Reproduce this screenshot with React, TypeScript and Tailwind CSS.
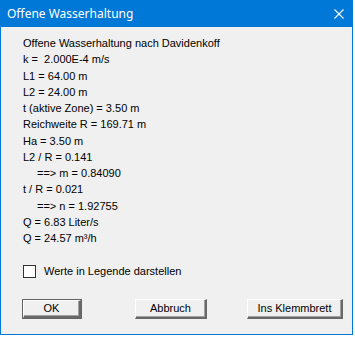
import React from "react";

const lines: { text: React.ReactNode; indent?: boolean }[] = [
  { text: "Offene Wasserhaltung nach Davidenkoff" },
  { text: "k =  2.000E-4 m/s" },
  { text: "L1 = 64.00 m" },
  { text: "L2 = 24.00 m" },
  { text: "t (aktive Zone) = 3.50 m" },
  { text: "Reichweite R = 169.71 m" },
  { text: "Ha = 3.50 m" },
  { text: "L2 / R = 0.141" },
  { text: "==> m = 0.84090", indent: true },
  { text: "t / R = 0.021" },
  { text: "==> n = 1.92755", indent: true },
  { text: "Q = 6.83 Liter/s" },
  { text: "Q = 24.57 m³/h" },
];

function Button({ label, isDefault, className }: { label: string; isDefault?: boolean; className: string }) {
  return (
    <button
      className={`${className} h-[20px] ${isDefault ? "border border-[#646464]" : ""} bg-[#f0f0f0] p-0`}
    >
      <span
        className="flex h-full w-full items-center justify-center border-t border-l border-white border-b-2 border-r-2 border-b-[#696969] border-r-[#696969] text-[11px] text-black"
        style={{ boxShadow: "inset -1px -1px 0 #a0a0a0" }}
      >
        {label}
      </span>
    </button>
  );
}

export default function App() {
  return (
    <div className="h-[337px] w-[355px] bg-white font-['Liberation_Sans',Arial,sans-serif]">
      <div className="flex h-[335px] w-[353px] flex-col border-x border-b border-[#0078d7] bg-[#f0f0f0]">
        <div className="-mx-px flex h-[27px] items-center justify-between bg-[#0078d7] pl-[7px] pr-[9px] text-white">
          <span className="font-['Noto_Sans',sans-serif] text-[12px] leading-none">Offene Wasserhaltung</span>
          <svg width="10" height="10" viewBox="0 0 10 10" className="mt-[1px]">
            <path d="M0.5 0.5 L9.5 9.5 M9.5 0.5 L0.5 9.5" stroke="white" strokeWidth="1.1" />
          </svg>
        </div>

        <div className="flex flex-1 flex-col pl-[21px] pt-[8px] text-[11px] text-black">
          <div className="flex flex-col pl-px">
            {lines.map((l, i) => (
              <div key={i} className={`h-[16.25px] whitespace-pre leading-[16px] ${l.indent ? "pl-[14px]" : ""}`}>
                {l.text}
              </div>
            ))}
          </div>

          <label className="mt-[17px] flex items-center gap-[8px]">
            <span className="ml-px h-[13px] w-[13px] border border-[#333333] bg-white" />
            <span>Werte in Legende darstellen</span>
          </label>

          <div className="mt-[19px] flex items-center">
            <Button label="OK" isDefault className="w-[60px]" />
            <Button label="Abbruch" className="ml-[53px] w-[72px]" />
            <Button label="Ins Klemmbrett" className="ml-[40px] w-[96px]" />
          </div>
        </div>
      </div>
    </div>
  );
}
